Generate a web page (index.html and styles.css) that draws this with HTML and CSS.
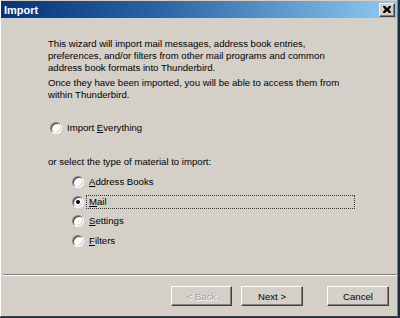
FILE: index.html
```html
<!DOCTYPE html>
<html lang="en">
<head>
    <meta charset="UTF-8">
    <title>Import</title>
    <link rel="stylesheet" href="styles.css">
</head>
<body>
    <div class="window">
        <div class="titlebar">
            <span class="title">Import</span>
            <span class="close">
                <svg width="8" height="7" viewBox="0 0 8 7">
                    <path d="M0 0h2l2 2 2-2h2v1l-2 2.5 2 2.5v1h-2l-2-2-2 2h-2v-1l2-2.5-2-2.5z" fill="#000"/>
                </svg>
            </span>
        </div>

        <div class="content">
            <p class="intro">This wizard will import mail messages, address book entries,<br>
            preferences, and/or filters from other mail programs and common<br>
            address book formats into Thunderbird.</p>
            <p class="intro second">Once they have been imported, you will be able to access them from<br>
            within Thunderbird.</p>

            <label class="option everything"><span class="radio"></span><span>Import <u>E</u>verything</span></label>

            <p class="select-text">or select the type of material to import:</p>

            <div class="choices">
                <label class="option"><span class="radio"></span><span><u>A</u>ddress Books</span></label>
                <label class="option"><span class="radio checked"></span><span class="focus"><u>M</u>ail</span></label>
                <label class="option"><span class="radio"></span><span><u>S</u>ettings</span></label>
                <label class="option"><span class="radio"></span><span><u>F</u>ilters</span></label>
            </div>
        </div>

        <div class="separator"></div>

        <div class="buttons">
            <button class="btn back" disabled>&lt; Back</button>
            <button class="btn next">Next &gt;</button>
            <button class="btn cancel">Cancel</button>
        </div>
    </div>
</body>
</html>
```

FILE: styles.css
```css
html, body {
    margin: 0;
    padding: 0;
    background: #1c2c44;
}
body {
    width: 400px;
    height: 318px;
    overflow: hidden;
    font-family: "Liberation Sans", Arial, sans-serif;
    font-size: 9.6px;
    color: #000;
}
.window {
    width: 396px;
    height: 316px;
    background: #d4d0c8;
    border-left: 1px solid #fff;
    border-right: 1px solid #808080;
    border-bottom: 1px solid #404040;
    display: flex;
    flex-direction: column;
}
.titlebar {
    height: 17px;
    margin-top: 1px;
    background: linear-gradient(to right, #06347a 0%, #2a64a4 40%, #90caf2 100%);
    display: flex;
    align-items: center;
    justify-content: space-between;
    padding: 0 2px 0 3px;
}
.title {
    color: #fff;
    font-weight: bold;
    font-size: 11px;
}
.close {
    width: 14px;
    height: 12px;
    background: #d4d0c8;
    border-top: 1px solid #fff;
    border-left: 1px solid #fff;
    border-right: 1px solid #404040;
    border-bottom: 1px solid #404040;
    box-shadow: inset -1px -1px 0 #808080;
    display: flex;
    align-items: center;
    justify-content: center;
}
.content {
    padding: 20px 0 0 47px;
    flex: 1;
}
.intro {
    margin: 0;
    line-height: 12px;
}
.intro.second {
    margin-top: 3px;
}
.option {
    display: flex;
    align-items: center;
    height: 14px;
    line-height: 14px;
}
.everything {
    margin: 20px 0 0 2px;
}
.select-text {
    margin: 21px 0 0;
    line-height: 12px;
}
.choices {
    margin: 7px 0 0 24px;
    display: flex;
    flex-direction: column;
    gap: 5.6px;
}
.radio {
    width: 10px;
    height: 10px;
    border-radius: 50%;
    background: #fff;
    border: 1px solid;
    border-color: #808080 #fff #fff #808080;
    box-shadow: inset 1px 1px 0 #404040, inset -1px -1px 0 #d4d0c8;
    margin-right: 5px;
    position: relative;
    flex: none;
}
.radio.checked::after {
    content: "";
    position: absolute;
    left: 3px;
    top: 3px;
    width: 4px;
    height: 4px;
    border-radius: 50%;
    background: #000;
}
.focus {
    width: 265px;
    height: 12px;
    line-height: 12px;
    border: 1px dotted #333;
    padding-left: 2px;
    margin-left: -3px;
}
.separator {
    margin: 0 0 0 2px;
    height: 1px;
    background: #808080;
    border-bottom: 1px solid #fff;
}
.buttons {
    display: flex;
    justify-content: flex-end;
    padding: 10px 8px 0 0;
    height: 30px;
}
.btn {
    font-family: inherit;
    font-size: 9.6px;
    width: 62px;
    height: 20px;
    padding: 0;
    background: #d4d0c8;
    color: #000;
    border-top: 1px solid #fff;
    border-left: 1px solid #fff;
    border-right: 1px solid #404040;
    border-bottom: 1px solid #404040;
    box-shadow: inset -1px -1px 0 #808080;
    margin-left: 9px;
}
.btn.back {
    width: 61px;
    color: #a0a0a0;
    text-shadow: 1px 1px 0 #fff;
}
.btn.cancel {
    margin-left: 24px;
}
```
